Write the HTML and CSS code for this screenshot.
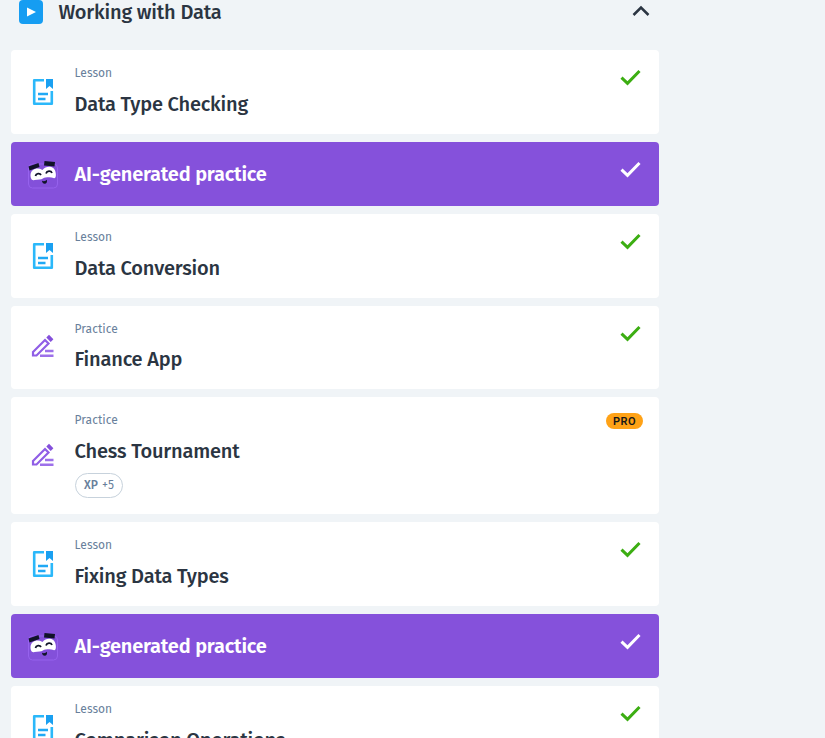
FILE: index.html
```
<!DOCTYPE html>
<html lang="en">
<head>
<meta charset="utf-8">
<title>Working with Data</title>
<link rel="stylesheet" href="styles.css">
</head>
<body>
<svg class="defs" aria-hidden="true">
  <symbol id="lesson" viewBox="0 0 22 28"><path d="M12 2.200H2.200V25.800H19.800V13" fill="none" stroke="#2bb8fa" stroke-width="2.600" stroke-linejoin="round"/><path d="M6 16h10M6 21h7.500" stroke="#20a9f5" stroke-width="2.400"/><path d="M14 1h7v10L17.500 8 14 11z" fill="#1aa0f1"/></symbol>
  <symbol id="practice" viewBox="0 0 24 24"><path d="M2 18 14 6 17.500 9.500 5.500 21.500H2z" fill="none" stroke="#905ee6" stroke-width="2.200"/><path d="m15.300 3.500 2.700-2.700 4.400 4.400L19.700 7.900z" fill="#844fdb"/><path d="M14 17h8.500M9 21.800h13.500" stroke="#9d70ea" stroke-width="2.400"/></symbol>
  <symbol id="check" viewBox="0 0 22 18"><path d="m1.500 9.600 6 5.800L19.500 3" fill="none" stroke="currentColor" stroke-width="3"/></symbol>
  <symbol id="face" viewBox="0 0 32 32"><rect x="1.500" y="6" width="29" height="24" rx="4" fill="#8350da" stroke="#9662ed"/><path d="M3.500 17C4 11 10 9 15.500 12c4-5 12-4 13 2 1 4 0 7-2 6-2-1-5-1-8-.5-2 0-3 2-6 2l-5 .5c-3 1-4-2-4-5z" fill="#fff"/><path d="m1.500 8.500 10-3.500 1 4-10 3.500zM17.500 3l10.500 1-.5 4.500-10.500-1z" fill="#101329"/><path d="M8.500 18c.5-3 4.500-3 5.500-1M19 15.500c1-3 5-3 6-.5" fill="none" stroke="#101329" stroke-width="1.800"/><path d="M15 22.800q3 1 5-1 .3 4-2.200 4t-2.800-3z" fill="#101329"/></symbol>
</svg>
<main class="course">
  <header class="heading">
    <svg class="play" viewBox="0 0 24 24"><rect width="24" height="24" rx="4" fill="#169df2"/><path d="M8 7.500v9l9-4.500z" fill="#fff"/></svg>
    <h1 class="title">Working with Data</h1>
    <svg class="chevron" viewBox="0 0 18 12"><path d="m1.500 10 7.500-7.500L16.500 10" fill="none" stroke="#2b3542" stroke-width="2.500"/></svg>
  </header>
  <section class="list">
    <article class="card"><svg class="lesson"><use href="#lesson"/></svg><div class="body"><p class="kind">Lesson</p><h2 class="title">Data Type Checking</h2></div><svg class="check"><use href="#check"/></svg></article>
    <article class="card ai"><svg class="face"><use href="#face"/></svg><div class="body"><h2 class="title">AI-generated practice</h2></div><svg class="check"><use href="#check"/></svg></article>
    <article class="card"><svg class="lesson"><use href="#lesson"/></svg><div class="body"><p class="kind">Lesson</p><h2 class="title">Data Conversion</h2></div><svg class="check"><use href="#check"/></svg></article>
    <article class="card short"><svg class="practice"><use href="#practice"/></svg><div class="body"><p class="kind">Practice</p><h2 class="title">Finance App</h2></div><svg class="check"><use href="#check"/></svg></article>
    <article class="card tall"><svg class="practice"><use href="#practice"/></svg><div class="body"><p class="kind">Practice</p><h2 class="title">Chess Tournament</h2><span class="xp"><b>XP</b> +5</span></div><span class="pro">PRO</span></article>
    <article class="card"><svg class="lesson"><use href="#lesson"/></svg><div class="body"><p class="kind">Lesson</p><h2 class="title">Fixing Data Types</h2></div><svg class="check"><use href="#check"/></svg></article>
    <article class="card ai"><svg class="face"><use href="#face"/></svg><div class="body"><h2 class="title">AI-generated practice</h2></div><svg class="check"><use href="#check"/></svg></article>
    <article class="card"><svg class="lesson"><use href="#lesson"/></svg><div class="body"><p class="kind">Lesson</p><h2 class="title">Comparison Operations</h2></div><svg class="check"><use href="#check"/></svg></article>
  </section>
</main>
</body>
</html>
```
FILE: styles.css
```
* { box-sizing: border-box; }
body { margin: 0; height: 738px; overflow: hidden; background: #f0f4f7; color: #2b3542; font-family: "Fira Sans", "Noto Sans", sans-serif; }
.defs { position: absolute; width: 0; height: 0; }
h1, h2, p { margin: 0; }
svg { display: block; flex: none; }
.course { width: 648px; margin-left: 11px; }
.heading { height: 50px; padding: 0 9px 0 8px; display: flex; align-items: flex-start; }
.play { width: 24px; height: 24px; }
.title { font-size: 20px; font-weight: 500; line-height: 28px; white-space: nowrap; letter-spacing: -0.18px; }
.heading .title { margin-left: 15.5px; line-height: 24px; flex: 1; }
.chevron { width: 18px; height: 12px; margin-top: 5px; }
.list { display: flex; flex-direction: column; gap: 8px; }
.card { display: flex; height: 84px; padding: 0 17px 0 21px; border-radius: 4px; background: #fff; align-items: center; }
.card.short { height: 83px; }
.card.tall { height: 117px; padding-right: 16px; }
.lesson { width: 22px; height: 28px; }
.practice { width: 24px; height: 24px; margin: 0 -1px 0 -1px; }
.short .practice { margin-top: -3px; }
.tall .practice { margin-top: -2px; }
.face { width: 32px; height: 32px; margin: 0 -4.5px 0 -5.5px; }
.body { flex: 1; margin-left: 20.6px; align-self: flex-start; padding-top: 14px; }
.kind { font-size: 12px; line-height: 18px; color: #68809b; letter-spacing: 0.04px; }
.body .kind + .title { margin-top: 8px; }
.short .kind + .title { margin-top: 7px; }
.check { width: 22px; height: 18px; align-self: flex-start; margin-top: 18px; color: #3cae12; }
.card.ai { height: 64px; background: #8551db; color: #fff; }
.ai .check { color: #fff; }
.ai .body { padding-top: 18px; }
.ai .title { font-weight: 600; letter-spacing: -0.2px; }
.xp { display: block; width: 48px; height: 25px; margin: 8px 0 0 0.4px; border: 1px solid #c7d2dc; border-radius: 13px; color: #68809b; font-size: 12px; line-height: 22px; text-align: center; }
.xp b { font-weight: 500; margin-right: 1px; }
.pro { width: 37px; height: 16px; margin-top: 16px; align-self: flex-start; border-radius: 8px; background: #ffa216; color: #171717; font: 600 11px/17px Roboto, sans-serif; letter-spacing: 0.4px; text-align: center; }
```
